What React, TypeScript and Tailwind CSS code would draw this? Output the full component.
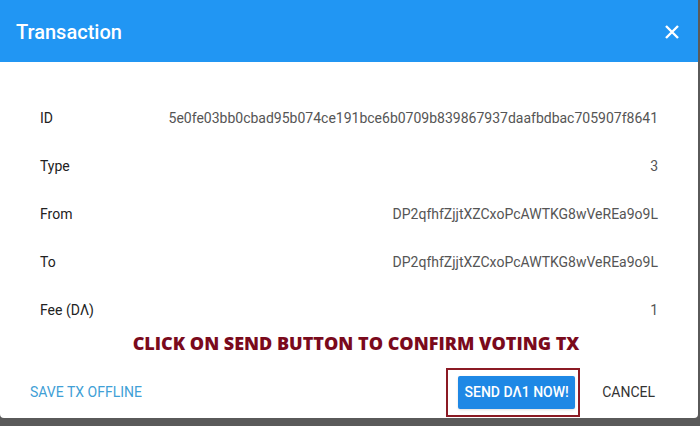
import React from "react";

const rows: [string, string][] = [
  ["ID", "5e0fe03bb0cbad95b074ce191bce6b0709b839867937daafbdbac705907f8641"],
  ["Type", "3"],
  ["From", "DP2qfhfZjjtXZCxoPcAWTKG8wVeREa9o9L"],
  ["To", "DP2qfhfZjjtXZCxoPcAWTKG8wVeREa9o9L"],
  ["Fee (DΛ)", "1"],
];

export default function App() {
  return (
    <div className="w-[700px] h-[426px] bg-[#5a5a5a] overflow-hidden" style={{ fontFamily: "Roboto, 'Liberation Sans', sans-serif" }}>
      <div className="w-[698px] h-[418px] bg-white rounded-b-[4px] flex flex-col">
        <div className="h-[62px] shrink-0 bg-[#2196f3] flex items-center justify-between pl-4 pr-[18px] pt-[2px]">
          <span className="text-white text-[20px] font-medium">Transaction</span>
          <svg width="16" height="16" viewBox="0 0 16 16">
            <path d="M2 2L14 14M14 2L2 14" stroke="white" strokeWidth="2.4" strokeLinecap="butt" />
          </svg>
        </div>
        <div className="flex flex-col pt-[32px] pl-[40px] pr-[40px]">
          {rows.map(([k, v]) => (
            <div key={k} className="h-[48px] flex items-center justify-between text-[14px]">
              <span className="text-[#222]">{k}</span>
              <span className="text-[#555]">{v}</span>
            </div>
          ))}
        </div>
        <div className="-mt-[4px] text-center text-[#7a0a1c] text-[18px] font-extrabold pl-[14px]" style={{ fontFamily: "'Open Sans', sans-serif" }}>
          CLICK ON SEND BUTTON TO CONFIRM VOTING TX
        </div>
        <div className="mt-[11px] flex items-center pl-[30px] pr-[43px]">
          <span className="text-[#3fa0d6] text-[14px]">SAVE TX OFFLINE</span>
          <div className="ml-auto border-2 border-[#8b1a24] w-[134px] h-[49px] flex items-center justify-end pr-[3px]">
            <div className="w-[117px] h-[33px] rounded-[2px] bg-[#1e88e5] text-white font-medium text-[14px] flex items-center justify-center shadow-sm">
              SEND DΛ1 NOW!
            </div>
          </div>
          <span className="ml-[22px] text-[#333] text-[14px]">CANCEL</span>
        </div>
      </div>
    </div>
  );
}
